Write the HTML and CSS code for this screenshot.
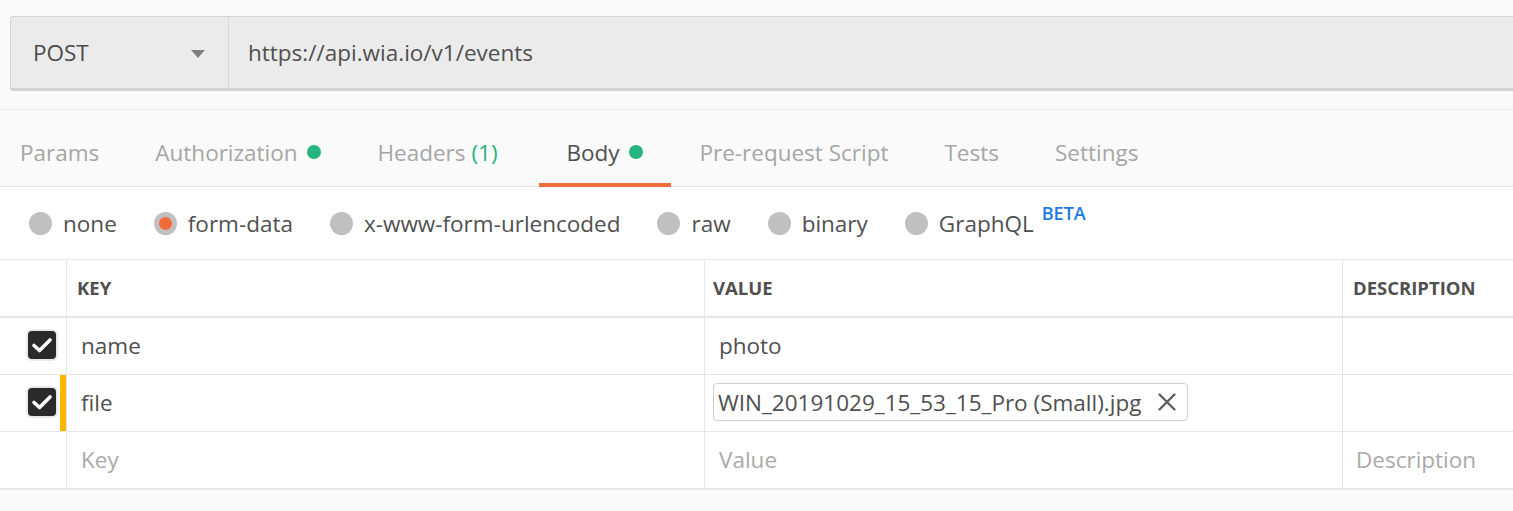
FILE: index.html
```html
<!DOCTYPE html>
<html>
<head>
<meta charset="utf-8">
<link rel="stylesheet" href="styles.css">
</head>
<body>
<div class="app">
  <div class="urlsec">
    <div class="urlbar">
      <div class="method">
        <span class="method-name">POST</span>
        <span class="caret"></span>
      </div>
      <div class="url">https://api.wia.io/v1/events</div>
    </div>
  </div>
  <div class="tabs">
    <div class="tab first">Params</div>
    <div class="tab">Authorization <span class="dot"></span></div>
    <div class="tab wide">Headers <span class="count">(1)</span></div>
    <div class="tab active">Body <span class="dot"></span></div>
    <div class="tab">Pre-request Script</div>
    <div class="tab">Tests</div>
    <div class="tab">Settings</div>
  </div>
  <div class="content">
    <div class="radios">
      <div class="radio"><span class="circle"></span><span>none</span></div>
      <div class="radio"><span class="circle on"></span><span>form-data</span></div>
      <div class="radio"><span class="circle"></span><span>x-www-form-urlencoded</span></div>
      <div class="radio"><span class="circle"></span><span>raw</span></div>
      <div class="radio"><span class="circle"></span><span>binary</span></div>
      <div class="radio"><span class="circle"></span><span>GraphQL</span><sup class="beta">BETA</sup></div>
    </div>
    <div class="table">
      <div class="row head">
        <div class="cell chk"></div>
        <div class="cell key">KEY</div>
        <div class="cell val">VALUE</div>
        <div class="cell desc">DESCRIPTION</div>
      </div>
      <div class="row body">
        <div class="cell chk"><span class="cb"><svg width="22" height="22" viewBox="0 0 22 22"><path d="M3 11.5 L8.5 16.5 L19 6" fill="none" stroke="#fff" stroke-width="3.6" stroke-linecap="round" stroke-linejoin="round"/></svg></span></div>
        <div class="cell key text">name</div>
        <div class="cell val text">photo</div>
        <div class="cell desc"></div>
      </div>
      <div class="row body">
        <div class="cell chk marked"><span class="cb"><svg width="22" height="22" viewBox="0 0 22 22"><path d="M3 11.5 L8.5 16.5 L19 6" fill="none" stroke="#fff" stroke-width="3.6" stroke-linecap="round" stroke-linejoin="round"/></svg></span></div>
        <div class="cell key text">file</div>
        <div class="cell val"><span class="chip">WIN_20191029_15_53_15_Pro (Small).jpg<svg class="x" width="20" height="20" viewBox="0 0 20 20"><path d="M2.5 2.5 L17.5 17.5 M17.5 2.5 L2.5 17.5" stroke="#5e5e5e" stroke-width="2.4" stroke-linecap="round"/></svg></span></div>
        <div class="cell desc"></div>
      </div>
      <div class="row body last">
        <div class="cell chk"></div>
        <div class="cell key text ph">Key</div>
        <div class="cell val text ph">Value</div>
        <div class="cell desc text ph">Description</div>
      </div>
    </div>
  </div>
</div>
</body>
</html>
```
FILE: styles.css
```css
html, body {
  margin: 0;
  padding: 0;
  background: #fafafa;
}
body {
  font-family: "Open Sans", "Liberation Sans", sans-serif;
  width: 1513px;
  height: 511px;
  overflow: hidden;
}
.urlsec {
  padding: 16px 0 18px 10px;
  border-bottom: 1px solid #ececec;
}
.urlbar {
  display: flex;
  height: 71px;
  background: #ebebeb;
  border-top: 1px solid #d4d4d4;
  border-left: 1px solid #d4d4d4;
  border-bottom: 3px solid #d2d2d2;
  border-radius: 3px 0 0 3px;
}
.method {
  width: 218px;
  display: flex;
  align-items: center;
  justify-content: space-between;
  padding: 0 23px 0 22px;
  box-sizing: border-box;
  border-right: 1px solid #d6d6d6;
}
.method-name {
  font-size: 22.5px;
  color: #4a4a4a;
}
.caret {
  width: 0;
  height: 0;
  border-left: 7px solid transparent;
  border-right: 7px solid transparent;
  border-top: 8px solid #808080;
  margin-top: 2px;
}
.url {
  display: flex;
  align-items: center;
  padding-left: 19px;
  font-size: 22.5px;
  color: #505050;
}
.tabs {
  display: flex;
  height: 76px;
  border-bottom: 1px solid #e6e6e6;
}
.tab {
  display: flex;
  align-items: center;
  padding: 11px 28px 0 28px;
  font-size: 22.5px;
  color: #a6a6a6;
  border-bottom: 4px solid transparent;
  margin-bottom: -1px;
  white-space: pre;
}
.tab.first {
  padding-left: 20px;
}
.tab.wide {
  padding-right: 41px;
}
.tab.active {
  color: #505050;
  border-bottom-color: #f26b3a;
}
.dot {
  display: inline-block;
  width: 14px;
  height: 14px;
  border-radius: 50%;
  background: #26b47f;
  margin-left: 4px;
}
.count {
  color: #26b47f;
}
.content {
  background: #fff;
}
.radios {
  display: flex;
  align-items: center;
  height: 72px;
  padding-left: 29px;
  border-bottom: 1px solid #e6e6e6;
}
.radio {
  display: flex;
  align-items: center;
  margin-right: 37px;
  font-size: 22.5px;
  color: #505050;
  position: relative;
}
.circle {
  width: 23px;
  height: 23px;
  border-radius: 50%;
  background: #c0c0c0;
  margin-right: 11px;
  display: flex;
  align-items: center;
  justify-content: center;
}
.circle.on::after {
  content: "";
  width: 13px;
  height: 13px;
  border-radius: 50%;
  background: #f26b3a;
}
.beta {
  font-size: 18px;
  font-weight: 600;
  color: #1a7ae0;
  margin-left: 8px;
  align-self: flex-start;
  margin-top: -7px;
}
.table {
  border-bottom: 2px solid #e6e6e6;
}
.row {
  display: flex;
  height: 56px;
  border-bottom: 1px solid #e6e6e6;
}
.row.head {
  height: 56px;
  border-bottom: 2px solid #e6e6e6;
}
.row.last {
  border-bottom: none;
}
.cell {
  display: flex;
  align-items: center;
  box-sizing: border-box;
  border-right: 1px solid #e6e6e6;
}
.row.body .cell {
  padding-bottom: 2px;
}
.chk {
  width: 67px;
  justify-content: flex-start;
  padding-left: 28px;
  position: relative;
}
.chk.marked::after {
  content: "";
  position: absolute;
  right: 0;
  top: 0;
  bottom: 0;
  width: 6px;
  background: #ffb400;
}
.key {
  width: 638px;
  padding-left: 10px;
}
.val {
  width: 638px;
  padding-left: 8px;
}
.desc {
  flex: 1;
  border-right: none;
  padding-left: 10px;
}
.head .cell {
  font-size: 18.5px;
  font-weight: 700;
  color: #505050;
  padding-bottom: 1px;
}
.text {
  font-size: 22.5px;
  color: #505050;
}
.key.text {
  padding-left: 14px;
}
.val.text {
  padding-left: 14px;
}
.desc.text {
  padding-left: 13px;
}
.ph {
  color: #aaaaaa;
}
.cb {
  width: 28px;
  height: 28px;
  border-radius: 4px;
  background: #2a2a2a;
  box-shadow: 0 0 0 2px #e8e8e8;
  display: flex;
  align-items: center;
  justify-content: center;
}
.chip {
  display: flex;
  align-items: center;
  height: 36px;
  padding: 0 10px 0 4px;
  border: 1px solid #cfcfcf;
  border-radius: 4px;
  font-size: 22.5px;
  color: #505050;
}
.x {
  margin-left: 16px;
}
```
